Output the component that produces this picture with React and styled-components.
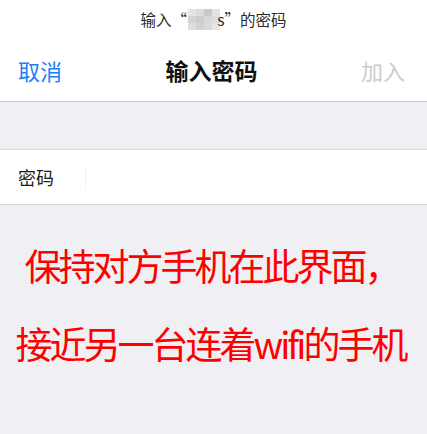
import React from "react";
import styled, { createGlobalStyle } from "styled-components";

const Global = createGlobalStyle`
  html, body { margin: 0; padding: 0; background: #efeff4; }
  body { font-family: "Noto Sans CJK SC", "Noto Sans", sans-serif; }
`;

const Page = styled.div`
  width: 427px;
  height: 434px;
  background: #efeff4;
  overflow: hidden;
`;

const Header = styled.div`
  background: #ffffff;
  border-bottom: 1px solid #cfcfd3;
  height: 101px;
  display: flex;
  flex-direction: column;
`;

const Prompt = styled.div`
  height: 38px;
  display: flex;
  align-items: center;
  justify-content: center;
  font-size: 15.5px;
  color: #2a2a2a;
`;

const Mosaic = styled.span`
  display: inline-grid;
  grid-template-columns: repeat(4, 8px);
  grid-template-rows: repeat(3, 7px);
  vertical-align: middle;
  margin: 0 -3px 0 1px;
`;

const Cell = styled.span`
  background: ${(p) => p.c};
`;

const NavBar = styled.div`
  flex: 1;
  display: grid;
  grid-template-columns: 1fr auto 1fr;
  align-items: center;
  padding: 0 22px 0 18px;
`;

const NavButton = styled.div`
  font-size: 22px;
  color: ${(p) => p.color};
  justify-self: ${(p) => p.align};
`;

const Title = styled.div`
  font-size: 23px;
  font-weight: 700;
  color: #111;
`;

const Row = styled.div`
  margin-top: 47px;
  height: 54px;
  background: #fff;
  border-top: 1px solid #d8d8dc;
  border-bottom: 1px solid #d8d8dc;
  display: flex;
  align-items: center;
  padding-left: 18px;
`;

const Label = styled.div`
  font-size: 18px;
  color: #1e1e1e;
  width: 67px;
`;

const Caret = styled.div`
  width: 1px;
  height: 22px;
  background: #f1f1f6;
`;

const Notice = styled.div`
  display: flex;
  flex-direction: column;
  align-items: center;
  padding-top: 40px;
  gap: 38px;
  color: #ff0000;
  font-size: 37px;
  line-height: 40px;
`;

const NoticeLine = styled.div`
  white-space: nowrap;
  letter-spacing: -3px;
  transform: translateX(${(p) => p.dx}px);
`;

const cells = [
  "#e4e4e4", "#dcdcdc", "#c9c9c9", "#e2e2e2",
  "#d4d4d4", "#cdcdcd", "#d8d8d8", "#dddddd",
  "#dedede", "#d3d3d3", "#dadada", "#e6e6e6",
];

export default function App() {
  return (
    <Page>
      <Global />
      <Header>
        <Prompt>
          输入“
          <Mosaic>
            {cells.map((c, i) => (
              <Cell key={i} c={c} />
            ))}
          </Mosaic>
          s”的密码
        </Prompt>
        <NavBar>
          <NavButton color="#1a7ff9" align="start">取消</NavButton>
          <Title>输入密码</Title>
          <NavButton color="#cbcbcb" align="end">加入</NavButton>
        </NavBar>
      </Header>
      <Row>
        <Label>密码</Label>
        <Caret />
      </Row>
      <Notice>
        <NoticeLine dx={-2}>保持对方手机在此界面，</NoticeLine>
        <NoticeLine dx={-3}>接近另一台连着wifi的手机</NoticeLine>
      </Notice>
    </Page>
  );
}
